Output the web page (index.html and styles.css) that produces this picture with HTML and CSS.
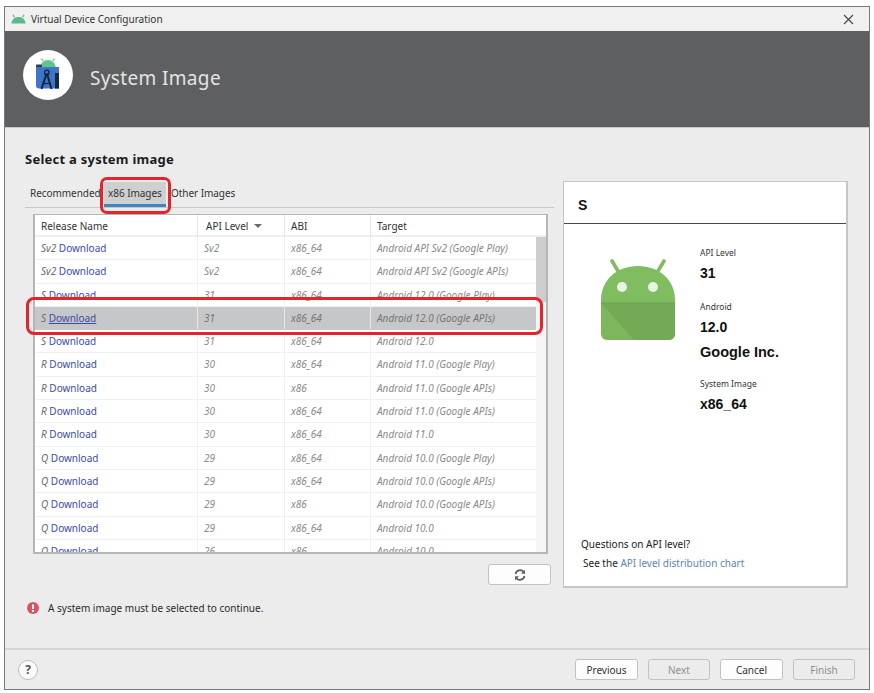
FILE: index.html
```html
<!DOCTYPE html>
<html lang="en">
<head>
<meta charset="utf-8">
<title>Virtual Device Configuration</title>
<link rel="stylesheet" href="styles.css">
</head>
<body>
<div class="window">
  <div class="titlebar">
    <svg class="title-icon" width="15" height="10" viewBox="0 0 15 10"><path d="M0.5 9.5C0.8 5.500 3.500 3 7.500 3s6.700 2.500 7 6.500z" fill="#5cb98a"/><path d="M3.500 3.500 2 0.800M11.500 3.500 13 0.800" stroke="#5cb98a" stroke-width="1.100"/></svg>
    <span class="title-text">Virtual Device Configuration</span>
    <svg class="close" width="11" height="11" viewBox="0 0 11 11"><path d="M1 1 10 10M10 1 1 10" stroke="#444a50" stroke-width="1.200"/></svg>
  </div>
  <div class="banner">
    <div class="logo">
      <svg width="34" height="36" viewBox="0 0 34 36">
        <path d="M9 12C9.500 6 12.500 3 17 3s7.500 3 8 9z" fill="#5cc68c"/>
        <path d="M12 4 10.500 1.500M22 4 23.500 1.500" stroke="#5cc68c" stroke-width="1.200"/>
        <rect x="5" y="7.500" width="6" height="5" rx="1" fill="#2c3e50"/>
        <path d="M5 10h23v21.500H8a3 3 0 0 1-3-3z" fill="#3f74c8"/>
        <rect x="24" y="16" width="4" height="15.500" fill="#16283f"/>
        <path d="M10.500 32 15.500 16.500M20.500 32 16 16.500" stroke="#14263c" stroke-width="2" fill="none"/>
        <circle cx="15.800" cy="15.500" r="2.300" fill="none" stroke="#14263c" stroke-width="1.300"/>
        <path d="M12 26.500h7.500" stroke="#14263c" stroke-width="1.200"/>
      </svg>
    </div>
    <div class="banner-title">System Image</div>
  </div>
  <div class="content">
    <h2 class="heading">Select a system image</h2>
    <div class="main">
      <div class="left">
        <div class="tabs">
          <span class="tab">Recommended</span>
          <span class="tab tab-active">x86 Images</span>
          <span class="tab">Other Images</span>
        </div>
        <div class="table">
          <div class="thead">
            <div class="th th-name">Release Name</div>
            <div class="th th-api">API Level <span class="sort"></span></div>
            <div class="th">ABI</div>
            <div class="th">Target</div>
          </div>
          <div class="scrollbar"><div class="thumb"></div></div>
          <div class="tbody">
            <div class="row"><div class="cell"><i>Sv2</i> <a class="dl">Download</a></div><div class="cell muted">Sv2</div><div class="cell muted">x86_64</div><div class="cell muted">Android API Sv2 (Google Play)</div></div>
            <div class="row"><div class="cell"><i>Sv2</i> <a class="dl">Download</a></div><div class="cell muted">Sv2</div><div class="cell muted">x86_64</div><div class="cell muted">Android API Sv2 (Google APIs)</div></div>
            <div class="row"><div class="cell"><i>S</i> <a class="dl">Download</a></div><div class="cell muted">31</div><div class="cell muted">x86_64</div><div class="cell muted">Android 12.0 (Google Play)</div></div>
            <div class="row row-selected"><div class="cell"><i>S</i> <a class="dl dl-selected">Download</a></div><div class="cell muted">31</div><div class="cell muted">x86_64</div><div class="cell muted">Android 12.0 (Google APIs)</div></div>
            <div class="row"><div class="cell"><i>S</i> <a class="dl">Download</a></div><div class="cell muted">31</div><div class="cell muted">x86_64</div><div class="cell muted">Android 12.0</div></div>
            <div class="row"><div class="cell"><i>R</i> <a class="dl">Download</a></div><div class="cell muted">30</div><div class="cell muted">x86_64</div><div class="cell muted">Android 11.0 (Google Play)</div></div>
            <div class="row"><div class="cell"><i>R</i> <a class="dl">Download</a></div><div class="cell muted">30</div><div class="cell muted">x86</div><div class="cell muted">Android 11.0 (Google APIs)</div></div>
            <div class="row"><div class="cell"><i>R</i> <a class="dl">Download</a></div><div class="cell muted">30</div><div class="cell muted">x86_64</div><div class="cell muted">Android 11.0 (Google APIs)</div></div>
            <div class="row"><div class="cell"><i>R</i> <a class="dl">Download</a></div><div class="cell muted">30</div><div class="cell muted">x86_64</div><div class="cell muted">Android 11.0</div></div>
            <div class="row"><div class="cell"><i>Q</i> <a class="dl">Download</a></div><div class="cell muted">29</div><div class="cell muted">x86_64</div><div class="cell muted">Android 10.0 (Google Play)</div></div>
            <div class="row"><div class="cell"><i>Q</i> <a class="dl">Download</a></div><div class="cell muted">29</div><div class="cell muted">x86_64</div><div class="cell muted">Android 10.0 (Google APIs)</div></div>
            <div class="row"><div class="cell"><i>Q</i> <a class="dl">Download</a></div><div class="cell muted">29</div><div class="cell muted">x86</div><div class="cell muted">Android 10.0 (Google APIs)</div></div>
            <div class="row"><div class="cell"><i>Q</i> <a class="dl">Download</a></div><div class="cell muted">29</div><div class="cell muted">x86_64</div><div class="cell muted">Android 10.0</div></div>
            <div class="row"><div class="cell"><i>Q</i> <a class="dl">Download</a></div><div class="cell muted">26</div><div class="cell muted">x86</div><div class="cell muted">Android 10.0</div></div>
          </div>
        </div>
        <div class="refresh-row">
          <button class="btn btn-refresh" type="button" aria-label="Refresh">
            <svg width="12" height="12" viewBox="0 0 12 12"><path d="M1.500 5A4.600 4.600 0 0 1 9.700 3M10.500 7A4.600 4.600 0 0 1 2.300 9" fill="none" stroke="#5a5f64" stroke-width="1.700"/><path d="M11 0.800V4.700H7.100zM1 11.200V7.300H4.900z" fill="#5a5f64"/></svg>
          </button>
        </div>
      </div>
      <aside class="panel">
        <div class="panel-head">S</div>
        <div class="panel-body">
          <svg class="android" width="76" height="82" viewBox="0 0 76 82">
            <path d="M18 12 12 2M58 12 64 2" stroke="#7fbb5f" stroke-width="3.600" stroke-linecap="round"/>
            <path d="M1 44V41C1 21 17 7 38 7s37 14 37 34v3z" fill="#80bc60"/>
            <path d="M1 44H75V75a6 6 0 0 1-6 6H7a6 6 0 0 1-6-6z" fill="#7db75c"/>
            <path d="M1 44H75V75a6 6 0 0 1-6 6H34z" fill="#74a955"/>
            <rect x="1" y="43.500" width="74" height="1" fill="#6e9f50"/>
            <circle cx="22" cy="28" r="5" fill="#e9f3e3"/>
            <circle cx="53" cy="28" r="5" fill="#e9f3e3"/>
          </svg>
          <div class="specs">
            <div class="spec-label">API Level</div>
            <div class="spec-value">31</div>
            <div class="spec-label spec-gap">Android</div>
            <div class="spec-value">12.0</div>
            <div class="spec-value spec-vendor">Google Inc.</div>
            <div class="spec-label spec-gap2">System Image</div>
            <div class="spec-value">x86_64</div>
          </div>
        </div>
        <div class="panel-foot">
          <div class="question">Questions on API level?</div>
          <div class="see">See the <a class="chart">API level distribution chart</a></div>
        </div>
      </aside>
    </div>
    <div class="message">
      <svg width="12" height="12" viewBox="0 0 12 12"><circle cx="6" cy="6" r="6" fill="#d9545f"/><rect x="5" y="2.500" width="2" height="4.500" fill="#fff"/><rect x="5" y="8" width="2" height="1.800" fill="#fff"/></svg>
      <span>A system image must be selected to continue.</span>
    </div>
    <div class="callout callout-tab"></div>
    <div class="callout callout-row"></div>
  </div>
  <div class="footer">
    <div class="help">?</div>
    <div class="actions">
      <button class="btn" type="button">Previous</button>
      <button class="btn btn-short btn-disabled" type="button">Next</button>
      <button class="btn" type="button">Cancel</button>
      <button class="btn btn-short btn-disabled" type="button">Finish</button>
    </div>
  </div>
</div>
</body>
</html>
```

FILE: styles.css
```css
* { box-sizing: border-box; }
html, body { margin: 0; height: 100%; background: #fff; }
body {
  padding: 6px 4px 3px 4px;
  font-family: "Noto Sans", "Open Sans", sans-serif;
  font-size: 10px;
  color: #2b2b2b;
}
.window {
  height: 684px;
  width: 866px;
  border: 1px solid #77787a;
  background: #ececec;
  display: flex;
  flex-direction: column;
  position: relative;
}
.titlebar {
  height: 24px;
  flex: none;
  display: flex;
  align-items: center;
  padding: 0 15px 0 6px;
  background: #f0f0f0;
  gap: 5px;
}
.title-text { font-size: 10px; color: #333; }
.close { margin-left: auto; }
.banner {
  height: 97px;
  flex: none;
  background: #5e5f61;
  border-bottom: 1px solid #c9c9c9;
  display: flex;
  align-items: center;
  padding: 0 0 3px 18px;
  gap: 17px;
}
.logo {
  width: 50px;
  height: 50px;
  margin-bottom: 5px;
  border-radius: 50%;
  background: #fff;
  display: flex;
  align-items: center;
  justify-content: center;
}
.banner-title { font-size: 19px; color: #e4e4e4; letter-spacing: 0.35px; }
.content {
  flex: 1;
  position: relative;
  padding: 22px 21px 0 20px;
  border-bottom: 2px solid #d6d6d6;
}
.heading {
  margin: 0;
  font-size: 13px;
  line-height: 18px;
  font-weight: 700;
  color: #1c1c1c;
  letter-spacing: 0.25px;
}
.main { display: flex; gap: 9px; margin-top: 12px; }
.left { width: 529px; flex: none; }
.tabs {
  height: 26px;
  margin-top: 2px;
  display: flex;
  align-items: flex-end;
  border-bottom: 1px solid #c8c8c8;
  padding-left: 5px;
}
.tab { height: 25px; line-height: 22px; font-size: 10px; color: #333; letter-spacing: -0.05px; }
.tab:first-child { width: 73px; }
.tab-active {
  width: 62px;
  padding-left: 4px;
  margin-left: 1px;
  margin-right: 5px;
  background: #cfcfcf;
  border-bottom: 3px solid #3f84c5;
}
.table {
  position: relative;
  width: 515px;
  height: 340px;
  margin: 6px 0 0 8px;
  border: 2px solid #b5b6b8;
  border-width: 1px 2px 2px 2px;
  background: #fff;
  overflow: hidden;
}
.thead {
  display: grid;
  grid-template-columns: 163px 87px 86px 165px;
  height: 22px;
  background: #fff;
  border-bottom: 2px solid #f0f0f0;
}
.th {
  padding-left: 6px;
  line-height: 22px;
  font-size: 10px;
  color: #333;
  border-right: 1px solid #e6e6e6;
}
.th-api { padding-left: 8px; }
.th-name { padding-left: 6px; }
.th:last-child { border-right: 0; }
.sort {
  display: inline-block;
  margin-left: 3px;
  vertical-align: 2px;
  border: 4px solid transparent;
  border-top: 4px solid #6a6a6a;
  border-bottom: 0;
}
.scrollbar {
  position: absolute;
  right: 0;
  top: 22px;
  bottom: 0;
  width: 10px;
  background: #f5f5f5;
}
.thumb { height: 65px; background: #cdcdcd; }
.tbody { width: 501px; }
.row {
  display: grid;
  grid-template-columns: 163px 87px 86px 165px;
  height: 23.3px;
  line-height: 22.3px;
  border-bottom: 1px solid #f0f0f0;
  white-space: nowrap;
}
.cell {
  padding-left: 6px;
  border-right: 1px solid #f0f0f0;
  overflow: hidden;
}
.cell:last-child { border-right: 0; }
.cell i { color: #6b6b6b; }
.dl { color: #3c4ca8; }
.muted { font-style: italic; color: #8a8a8a; }
.row-selected { background: #c6c7c8; border-bottom-color: #c6c7c8; }
.row-selected .cell { border-right-color: #e8e8e8; }
.row-selected .muted { color: #757575; }
.dl-selected { text-decoration: underline; }
.refresh-row { display: flex; justify-content: flex-end; margin-top: 10px; padding-right: 3px; }
.btn {
  height: 21px;
  width: 63px;
  padding: 0;
  font: inherit;
  font-size: 10px;
  color: #333;
  background: #fdfdfd;
  border: 1px solid #c2c2c2;
  border-radius: 3px;
}
.btn svg { display: block; margin: 0 auto; }
.btn-short { width: 62px; }
.btn-disabled { background: #ececec; color: #8f8f8f; }
.panel {
  width: 285px;
  height: 407px;
  margin-top: 1px;
  background: #fff;
  border: 1px solid #c6c6c6;
  border-bottom-width: 2px;
  border-right-width: 2px;
  display: flex;
  flex-direction: column;
}
.panel-head {
  height: 42px;
  flex: none;
  padding-left: 14px;
  border-bottom: 1px solid #46494d;
  font: 700 14px/46px "Liberation Sans", sans-serif;
  color: #111;
}
.panel-body { display: flex; flex: 1; padding: 35px 0 0 36px; }
.android { flex: none; }
.specs { margin-left: 24px; margin-top: -12px; }
.spec-label { font-size: 8.5px; line-height: 12px; color: #333; }
.spec-gap { margin-top: 18px; }
.spec-gap2 { margin-top: 16px; }
.spec-value {
  margin-top: 4px;
  font: 700 14px/20px "Liberation Sans", sans-serif;
  color: #111;
}
.spec-vendor { margin-top: 5px; font-size: 14.5px; }
.panel-foot { padding: 0 0 13px 17px; font-size: 10px; }
.question { line-height: 19px; color: #222; }
.see { line-height: 19px; padding-left: 2px; color: #222; }
.chart { color: #5b86b8; }
.message {
  display: flex;
  align-items: center;
  gap: 9px;
  margin: 13px 0 0 2px;
  font-size: 10px;
  color: #2b2b2b;
}
.callout {
  position: absolute;
  border: 3px solid #e3252b;
  border-radius: 7px;
}
.callout-tab { left: 95px; top: 49px; width: 71px; height: 37px; }
.callout-row { left: 21px; top: 169px; width: 517px; height: 38px; border-radius: 8px; }
.footer {
  height: 39px;
  flex: none;
  display: flex;
  align-items: center;
  padding: 0 14px 0 13px;
}
.help {
  width: 20px;
  height: 20px;
  border: 1px solid #bdbdbd;
  border-radius: 50%;
  background: #fbfbfb;
  text-align: center;
  font-weight: 700;
  font-size: 12px;
  line-height: 18px;
  color: #555;
}
.actions { margin-left: auto; display: flex; gap: 10px; }
```
